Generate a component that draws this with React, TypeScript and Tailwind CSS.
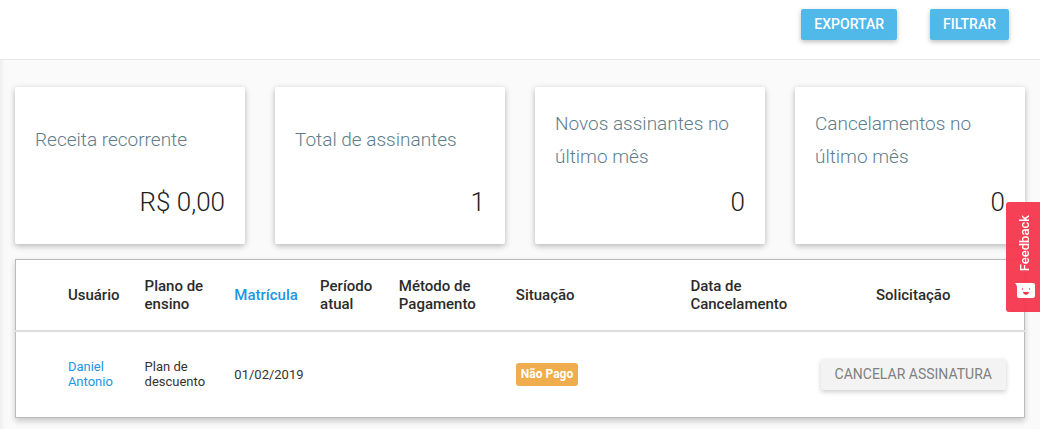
type Subscriber = {
  id: number;
  user: string;
  plan: string;
  enrolledAt: string;
  period: string;
  method: string;
  status: string;
  cancelledAt: string;
};

const stats = [
  { label: "Receita recorrente", value: "R$ 0,00" },
  { label: "Total de assinantes", value: "1" },
  { label: "Novos assinantes no último mês", value: "0" },
  { label: "Cancelamentos no último mês", value: "0" },
];

const subscribers: Subscriber[] = [
  { id: 1, user: "Daniel Antonio", plan: "Plan de descuento", enrolledAt: "01/02/2019", period: "", method: "", status: "Não Pago", cancelledAt: "" },
];

function ActionButton({ children }: { children: string }) {
  return (
    <button type="button" className="rounded-xs bg-[#51b9ea] px-[13px] py-[6px] text-sm leading-[19px] font-medium text-white uppercase shadow-[0_2px_5px_rgba(0,0,0,0.26)]">
      {children}
    </button>
  );
}

function StatCard({ label, value }: { label: string; value: string }) {
  return (
    <div className="flex flex-col rounded-xs bg-white px-5 pt-5 pb-[25px] shadow-[0_2px_6px_rgba(0,0,0,0.28)]">
      <div className="flex min-h-[64px] items-center">
        <h2 className="text-[19px] leading-[33px] font-light text-[#607d8b]">{label}</h2>
      </div>
      <div className="mt-auto pt-[13px] text-right text-[26px] leading-[33px] font-light text-[#212121]">{value}</div>
    </div>
  );
}

function SubscribersTable() {
  return (
    <table className="mt-[15px] w-full table-fixed border border-[#bbb] bg-white text-left shadow-[0_3px_6px_rgba(0,0,0,0.2)]">
      <colgroup>
        <col className="w-[4.4%]" />
        <col className="w-[7.6%]" />
        <col className="w-[8.9%]" />
        <col className="w-[8.5%]" />
        <col className="w-[7.8%]" />
        <col className="w-[11.6%]" />
        <col className="w-[17.3%]" />
        <col className="w-[11.9%]" />
        <col className="w-[22%]" />
      </colgroup>
      <thead>
        <tr className="h-[71px] border-b-2 border-[#ddd] text-[15px] leading-[18px] text-[#2b2b2b] [&>th]:px-2 [&>th]:font-medium">
          <td />
          <th scope="col">Usuário</th>
          <th scope="col">Plano de ensino</th>
          <th scope="col"><a href="#matricula" className="text-[#2196e3]">Matrícula</a></th>
          <th scope="col">Período atual</th>
          <th scope="col">Método de Pagamento</th>
          <th scope="col">Situação</th>
          <th scope="col">Data de Cancelamento</th>
          <th scope="col" className="text-center">Solicitação</th>
        </tr>
      </thead>
      <tbody>
        {subscribers.map((s) => (
          <tr key={s.id} className="h-[87px] text-[13px] leading-[15px] text-[#333] [&>td]:px-2">
            <td />
            <td><a href="#usuario" className="text-[#2196e3]">{s.user}</a></td>
            <td>{s.plan}</td>
            <td className="whitespace-nowrap">{s.enrolledAt}</td>
            <td>{s.period}</td>
            <td>{s.method}</td>
            <td>
              <span className="inline-block rounded-[3px] bg-[#f0ad4e] px-[5px] py-1 text-xs leading-[15px] font-bold text-white">{s.status}</span>
            </td>
            <td>{s.cancelledAt}</td>
            <td className="text-center">
              <button type="button" className="rounded-xs bg-[#f3f3f3] px-[14px] py-[6px] text-sm leading-[19px] whitespace-nowrap text-[#808080] uppercase shadow-[0_2px_5px_rgba(0,0,0,0.2)]">
                Cancelar assinatura
              </button>
            </td>
          </tr>
        ))}
      </tbody>
    </table>
  );
}

function FeedbackTab() {
  return (
    <button type="button" className="fixed top-[202px] right-0 flex w-[34px] flex-col items-center gap-3 rounded-l-[3px] bg-[#f4364c]/95 pt-[13px] pb-[14px] text-white">
      <span className="rotate-180 pr-1 text-[13px] leading-[18px] font-medium [writing-mode:vertical-rl]">Feedback</span>
      <svg viewBox="0 0 20 15" className="ml-1 h-[15px] w-5" aria-hidden="true">
        <path d="M0 0h18q2 0 2 2v11q0 2-2 2H4q-2 0-2-2V4Q2 2 0 0Z" fill="currentColor" />
        <circle cx="7.5" cy="6" r="0.7" fill="#f4364c" />
        <circle cx="14.5" cy="6" r="0.7" fill="#f4364c" />
        <path d="M7.8 9h6.4q-1 3-3.2 3T7.8 9Z" fill="#f4364c" />
      </svg>
    </button>
  );
}

export default function App() {
  return (
    <div className="min-h-screen bg-[#fafafa] font-[Roboto,sans-serif] shadow-[inset_4px_0_5px_-3px_rgba(0,0,0,0.08)]">
      <header className="flex justify-end gap-[33px] border-b border-[#e7e7e7] bg-white pt-[9px] pr-[31px] pb-[19px]">
        <ActionButton>Exportar</ActionButton>
        <ActionButton>Filtrar</ActionButton>
      </header>
      <main className="px-[15px] pt-[27px] pb-[11px]">
        <section className="grid grid-cols-4 gap-[30px]">
          {stats.map((s) => (
            <StatCard key={s.label} label={s.label} value={s.value} />
          ))}
        </section>
        <SubscribersTable />
      </main>
      <FeedbackTab />
    </div>
  );
}
